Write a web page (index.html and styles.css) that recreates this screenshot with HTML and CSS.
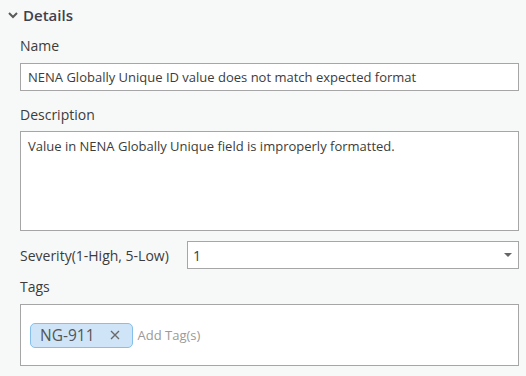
FILE: index.html
```html
<!DOCTYPE html>
<html lang="en">
<head>
    <meta charset="UTF-8">
    <title>Details</title>
    <link rel="stylesheet" href="styles.css">
</head>
<body>
    <div class="panel">
        <!-- Collapsible header -->
        <div class="section-header">
            <svg class="chevron" width="10" height="8" viewBox="0 0 10 8">
                <path d="M1 2 L5 6 L9 2" fill="none" stroke="#5a5a5a" stroke-width="2"/>
            </svg>
            <span>Details</span>
        </div>

        <div class="fields">
            <label class="field-label first">Name</label>
            <div class="text-box">NENA Globally Unique ID value does not match expected format</div>

            <label class="field-label">Description</label>
            <div class="text-area">Value in NENA Globally Unique field is improperly formatted.</div>

            <div class="severity-row">
                <label class="inline-label">Severity(1-High, 5-Low)</label>
                <div class="select-box">
                    <span>1</span>
                    <span class="arrow"></span>
                </div>
            </div>

            <label class="field-label tags-label">Tags</label>
            <div class="tag-box">
                <span class="tag">NG-911
                    <svg class="tag-x" width="10" height="10" viewBox="0 0 10 10">
                        <path d="M1 1 L9 9 M9 1 L1 9" stroke="#6a6a6a" stroke-width="1.4"/>
                    </svg>
                </span>
                <span class="tag-placeholder">Add Tag(s)</span>
            </div>
        </div>
    </div>
</body>
</html>
```

FILE: styles.css
```css
/* Details pane */
body { margin: 0; background-color: #f7f8f8; font-family: "Open Sans", "Noto Sans", Arial, sans-serif; color: #3c3c3c; }
.panel { width: 526px; height: 376px; overflow: hidden; }
.section-header { display: flex; align-items: center; height: 29px; padding-left: 8px; font-size: 15px; font-weight: 600; color: #3f3f4f; }
.chevron { margin-right: 5px; }
.fields { display: flex; flex-direction: column; padding: 0 7px 0 20px; }
.field-label { font-size: 14px; line-height: 20px; margin: 14px 0 6px; }
.field-label.first { margin: 7px 0 7px; }
.text-box { height: 28px; box-sizing: border-box; border: 1px solid #a6a6a6; background: #fff; font-size: 13px; line-height: 26px; padding-left: 7px; white-space: nowrap; }
.text-area { height: 100px; box-sizing: border-box; border: 1px solid #a6a6a6; background: #fff; font-size: 13px; line-height: 20px; padding: 4px 7px; }
.severity-row { display: flex; align-items: center; margin-top: 10px; }
.inline-label { width: 167px; font-size: 14px; }
.select-box { flex: 1; height: 28px; box-sizing: border-box; border: 1px solid #a6a6a6; background: #fff; display: flex; align-items: center; justify-content: space-between; padding: 0 6px 0 5px; font-size: 14px; }
.arrow { width: 0; height: 0; border-left: 4px solid transparent; border-right: 4px solid transparent; border-top: 4px solid #666; }
.tags-label { margin: 8px 0 7px; }
.tag-box { height: 62px; box-sizing: border-box; border: 1px solid #a6a6a6; background: #fff; display: flex; align-items: center; padding-left: 9px; }
.tag { display: flex; align-items: center; height: 25px; box-sizing: border-box; padding: 0 12px 0 9px; background: #cfe5f7; border: 1px solid #86c0ea; border-radius: 5px; font-size: 15.5px; color: #555; }
.tag-x { margin-left: 15px; }
.tag-placeholder { margin-left: 5px; font-size: 13px; color: #9a9a9a; }
```
